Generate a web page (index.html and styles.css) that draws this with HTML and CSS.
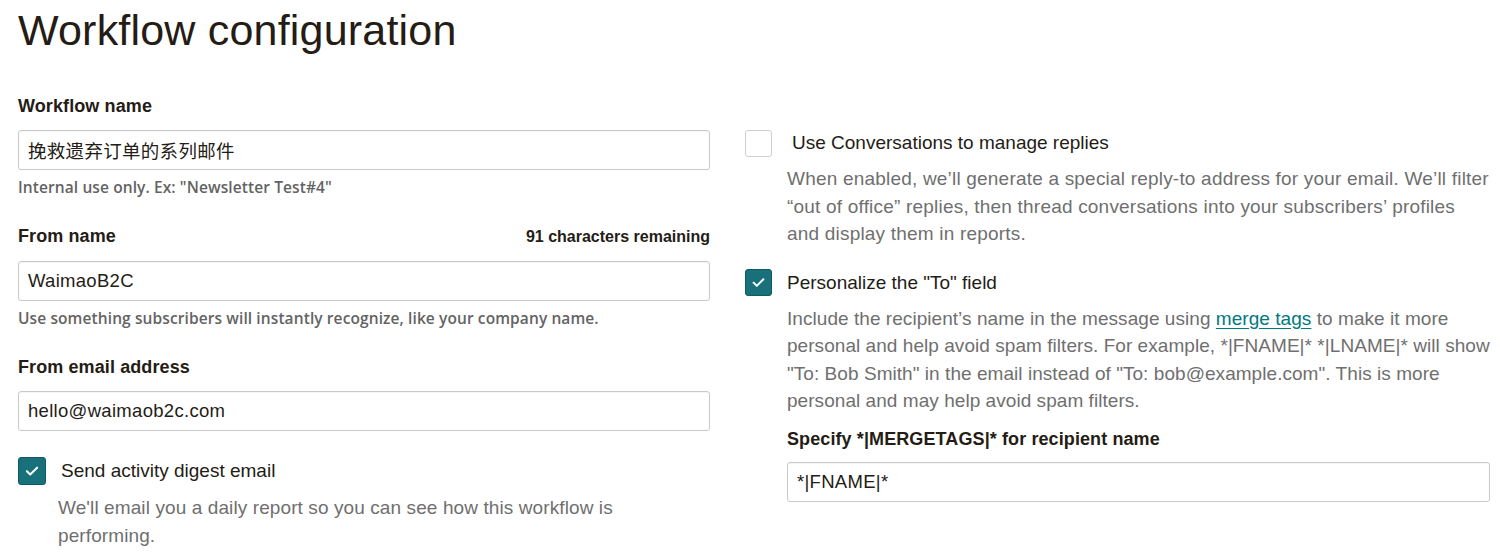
FILE: index.html
```html
<!DOCTYPE html>
<html lang="en">
<head>
<meta charset="utf-8">
<title>Workflow configuration</title>
<link rel="stylesheet" href="styles.css">
</head>
<body>
<main class="page">
  <h1 class="title">Workflow configuration</h1>
  <div class="columns">
    <section class="col col-left">
      <div class="field">
        <div class="label-row"><label class="label">Workflow name</label></div>
        <input class="input" type="text" value="挽救遗弃订单的系列邮件">
        <p class="helper">Internal use only. Ex: "Newsletter Test#4"</p>
      </div>
      <div class="field">
        <div class="label-row">
          <label class="label">From name</label>
          <span class="counter">91 characters remaining</span>
        </div>
        <input class="input" type="text" value="WaimaoB2C">
        <p class="helper">Use something subscribers will instantly recognize, like your company name.</p>
      </div>
      <div class="field">
        <div class="label-row"><label class="label">From email address</label></div>
        <input class="input" type="text" value="hello@waimaob2c.com">
      </div>
      <div class="option option-left">
        <div class="option-row">
          <span class="checkbox checked"><svg viewBox="0 0 28 28" width="28" height="28"><path d="M8.5 14.2l3.6 3.6 7.4-7.4" fill="none" stroke="#fff" stroke-width="2.2" stroke-linecap="round" stroke-linejoin="round"/></svg></span>
          <span class="option-label">Send activity digest email</span>
        </div>
        <p class="desc desc-left">We'll email you a daily report so you can see how this workflow is performing.</p>
      </div>
    </section>
    <section class="col col-right">
      <div class="option">
        <div class="option-row">
          <span class="checkbox"></span>
          <span class="option-label option-label-spaced">Use Conversations to manage replies</span>
        </div>
        <p class="desc">When enabled, we’ll generate a special reply-to address for your email. We’ll filter<br>“out of office” replies, then thread conversations into your subscribers’ profiles<br>and display them in reports.</p>
      </div>
      <div class="option option-second">
        <div class="option-row">
          <span class="checkbox checked"><svg viewBox="0 0 28 28" width="27" height="27"><path d="M8.5 14.2l3.6 3.6 7.4-7.4" fill="none" stroke="#fff" stroke-width="2.2" stroke-linecap="round" stroke-linejoin="round"/></svg></span>
          <span class="option-label">Personalize the "To" field</span>
        </div>
        <p class="desc desc-tight">Include the recipient’s name in the message using <a class="link" href="#">merge tags</a> to make it more<br>personal and help avoid spam filters. For example, *|FNAME|* *|LNAME|* will show<br>"To: Bob Smith" in the email instead of "To: bob@example.com". This is more<br>personal and may help avoid spam filters.</p>
        <div class="sub-field">
          <label class="label">Specify *|MERGETAGS|* for recipient name</label>
          <input class="input" type="text" value="*|FNAME|*">
        </div>
      </div>
    </section>
  </div>
</main>
</body>
</html>
```

FILE: styles.css
```css
* { box-sizing: border-box; }

html, body {
  margin: 0;
  background: #ffffff;
}

body {
  font-family: "Liberation Sans", Arial, "Noto Sans CJK SC", sans-serif;
  color: #241c15;
}

.page {
  padding: 0 10px 0 18px;
}

.title {
  margin: 0;
  font-size: 43px;
  font-weight: 400;
  line-height: 60px;
  height: 60px;
  letter-spacing: 0.2px;
}

.columns {
  display: flex;
  align-items: flex-start;
  gap: 35px;
  margin-top: 34px;
}

.col-left {
  width: 692px;
  flex: none;
}

.col-right {
  flex: 1;
  padding-top: 35px;
}

.field {
  margin-bottom: 26px;
}

.label-row {
  display: flex;
  justify-content: space-between;
  align-items: baseline;
  margin-bottom: 12px;
}

.label {
  display: block;
  font-size: 18px;
  line-height: 24px;
  font-weight: 700;
  letter-spacing: 0.1px;
}

.counter {
  font-size: 16px;
  font-weight: 700;
  line-height: 24px;
}

.input {
  display: block;
  width: 100%;
  height: 40px;
  padding: 0 9px;
  border: 1px solid #c9c9c9;
  border-radius: 3px;
  box-shadow: inset 0 1px 1px rgba(0,0,0,0.04);
  font-family: "Liberation Sans", Arial, "Noto Sans CJK SC", sans-serif;
  font-size: 18.5px;
  letter-spacing: 0.3px;
  color: #241c15;
  background: #fff;
  outline: none;
}

.helper {
  margin: 7px 0 0;
  font-family: "Open Sans", "Liberation Sans", sans-serif;
  font-size: 15.5px;
  font-weight: 600;
  line-height: 21px;
  letter-spacing: 0.1px;
  color: #636363;
}

.option-left {
  margin-top: 6px;
}

.option-row {
  display: flex;
  align-items: center;
  gap: 15px;
  height: 28px;
}

.checkbox {
  flex: none;
  width: 27px;
  height: 27px;
  border: 1px solid #cfcfcf;
  border-radius: 3px;
  background: #fff;
  display: flex;
  align-items: center;
  justify-content: center;
}

.option-left .checkbox {
  width: 28px;
  height: 28px;
}

.checkbox.checked {
  background: #17707a;
  border-color: #0f5a63;
}

.checkbox svg {
  display: block;
}

.option-label {
  font-size: 19px;
  line-height: 28px;
  color: #241c15;
}

.option-label-spaced {
  margin-left: 5px;
}

.desc {
  margin: 8px 0 0 42px;
  font-size: 19px;
  line-height: 27.5px;
  letter-spacing: 0.2px;
  color: #6f6f6f;
  white-space: nowrap;
}

.desc-tight {
  letter-spacing: 0.05px;
}

.desc-left {
  margin: 9px 0 0 40px;
  max-width: 600px;
  line-height: 28px;
  white-space: normal;
  letter-spacing: 0.1px;
}

.link {
  color: #00797f;
  text-decoration: underline;
  text-underline-offset: 3px;
}

.option-second {
  margin-top: 21px;
}

.sub-field {
  margin: 12px 0 0 42px;
}

.sub-field .label {
  margin-bottom: 11px;
}
```
